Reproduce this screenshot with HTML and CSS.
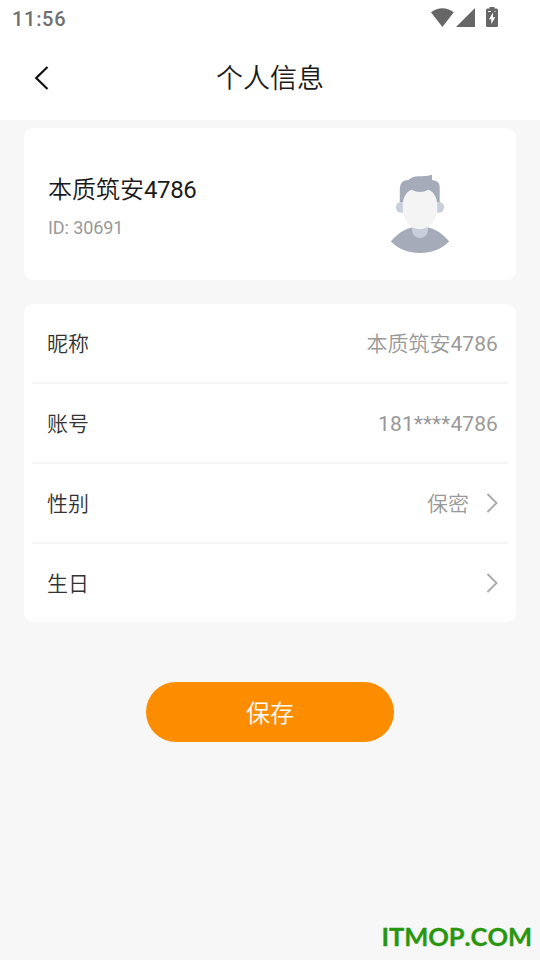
FILE: index.html
```html
<!DOCTYPE html>
<html lang="zh-CN">
<head>
<meta charset="utf-8">
<title>个人信息</title>
<link rel="stylesheet" href="styles.css">
</head>
<body>
<div class="screen">
  <div class="status">
    <span class="time">11:56</span>
    <svg class="status-icons" width="72" height="24" viewBox="430 6 72 24" fill="#666">
      <path d="M431 12.2Q442.400 4.300 453.800 12.200L442.400 26.900Z"/>
      <path d="M475 8V27H456Z"/>
      <path fill-rule="evenodd" d="M489.500 7h5v1.500h2q1.500 0 1.500 1.500v15.500q0 1.500-1.500 1.500h-9q-1.500 0-1.500-1.500V10q0-1.500 1.500-1.500h2ZM493 12.500l-4 6.800h2.300V24l4-6.800h-2.300Z"/>
      <path d="M488 11.500h3M494.500 11.500h1" stroke="#fff"/>
    </svg>
  </div>
  <header class="header">
    <svg class="back" width="16" height="26" viewBox="0 0 16 26" fill="none" stroke="#111" stroke-width="2.200"><path d="M13.500 2L2.200 13L13.500 24"/></svg>
    <h1 class="title">个人信息</h1>
  </header>
  <main class="content">
    <section class="card profile">
      <div class="who">
        <div class="name">本质筑安<span class="num">4786</span></div>
        <div class="uid">ID: 30691</div>
      </div>
      <svg class="avatar" width="60" height="80" viewBox="390 174 60 80">
        <path fill="#a5abb9" d="M390.800 241.500C399 231.500 409 226.500 420 226.500S441 231.500 449.200 241.500C441 249.500 431 253 420 253S399 249.500 390.800 241.500Z"/>
        <path fill="#c9cfda" d="M412 226h16v4a8 8 0 0 1-16 0Z"/>
        <circle cx="401.300" cy="207.300" r="5.500" fill="#c9cfda"/>
        <circle cx="438.700" cy="207.300" r="5.500" fill="#c9cfda"/>
        <path fill="#a5abb9" d="M399.800 202V189Q399.800 180 408.500 180Q412 176.500 418 176.300Q427 176.300 432 174.700V180Q439.700 180.500 439.700 187V202H436L420 195L404 202Z"/>
        <path fill="#f4f4f4" d="M411.500 189.800Q420 194.200 428.500 189.800C434 192 437.300 198 437.300 206C437.300 219 431.500 229 420 229S402.700 219 402.700 206C402.700 198 406 192 411.500 189.800Z"/>
      </svg>
    </section>
    <section class="card list">
      <div class="row"><span class="label">昵称</span><span class="value">本质筑安<span class="num-list">4786</span></span></div>
      <div class="row"><span class="label">账号</span><span class="value"><span class="num-list">181****4786</span></span></div>
      <div class="row"><span class="label">性别</span><span class="value">保密</span><svg class="arrow" width="12" height="20" viewBox="0 0 12 20"><path d="M1.500 1L10.500 10L1.500 19"/></svg></div>
      <div class="row"><span class="label">生日</span><span class="value"></span><svg class="arrow" width="12" height="20" viewBox="0 0 12 20"><path d="M1.500 1L10.500 10L1.500 19"/></svg></div>
    </section>
    <button class="save">保存</button>
  </main>
  <div class="watermark">ITMOP.COM</div>
</div>
</body>
</html>
```
FILE: styles.css
```css
* { box-sizing: border-box; }
body { margin: 0; font-family: Roboto, "Noto Sans CJK SC", sans-serif; }
.screen { position: relative; width: 540px; height: 960px; background: #f7f7f7; overflow: hidden; }
.status { height: 36px; padding: 0 38px 0 12px; display: flex; justify-content: space-between; align-items: center; background: #fff; }
.time { font-size: 20px; font-weight: 500; line-height: 36px; letter-spacing: .7px; color: #707070; padding-top: 2px; }
.header { height: 84px; background: #fff; display: grid; grid-template-columns: 60px 1fr 60px; align-items: center; }
.back { margin-left: 34px; }
.title { margin: 0; padding-top: 2px; font-size: 27px; font-weight: 350; line-height: 40px; text-align: center; color: #1a1a1a; }
.content { padding: 8px 24px 0; display: flex; flex-direction: column; }
.card { background: #fff; border-radius: 9px; }
.profile { height: 152px; padding: 0 66px 0 24px; display: flex; justify-content: space-between; align-items: center; }
.who { padding-top: 4px; }
.name { font-size: 24px; font-weight: 350; line-height: 36px; color: #1a1a1a; }
.num { font-weight: 400; letter-spacing: -.4px; }
.num-list { font-weight: 400; letter-spacing: .1px; }
.uid { font-size: 18px; line-height: 24px; margin-top: 8px; letter-spacing: -.1px; color: #999; }
.avatar { margin-top: 20px; }
.list { margin-top: 24px; height: 318px; padding: 0 8px; }
.row { height: 80px; padding: 0 10px 0 15px; display: flex; align-items: center; border-bottom: 2px solid #f5f5f5; font-size: 21px; font-weight: 350; line-height: 30px; }
.row:last-child { border-bottom: 0; height: 78px; }
.label, .value { padding-top: 2px; }
.label { color: #333; }
.value { flex: 1; text-align: right; color: #999; }
.arrow { margin-left: 17px; fill: none; stroke: #aaa; stroke-width: 1.9; }
.save { margin: 60px auto 0; width: 248px; height: 60px; padding: 0 0 2px; border: 0; border-radius: 30px; background: #fd8d00; color: #fff; font: 350 24px Roboto, "Noto Sans CJK SC", sans-serif; }
.watermark { position: absolute; right: 8px; bottom: 6px; font: 700 25.500px/36px Lato, sans-serif; letter-spacing: -.05px; font-kerning: none; -webkit-text-stroke: .3px #29960f; color: #29960f; }
```
